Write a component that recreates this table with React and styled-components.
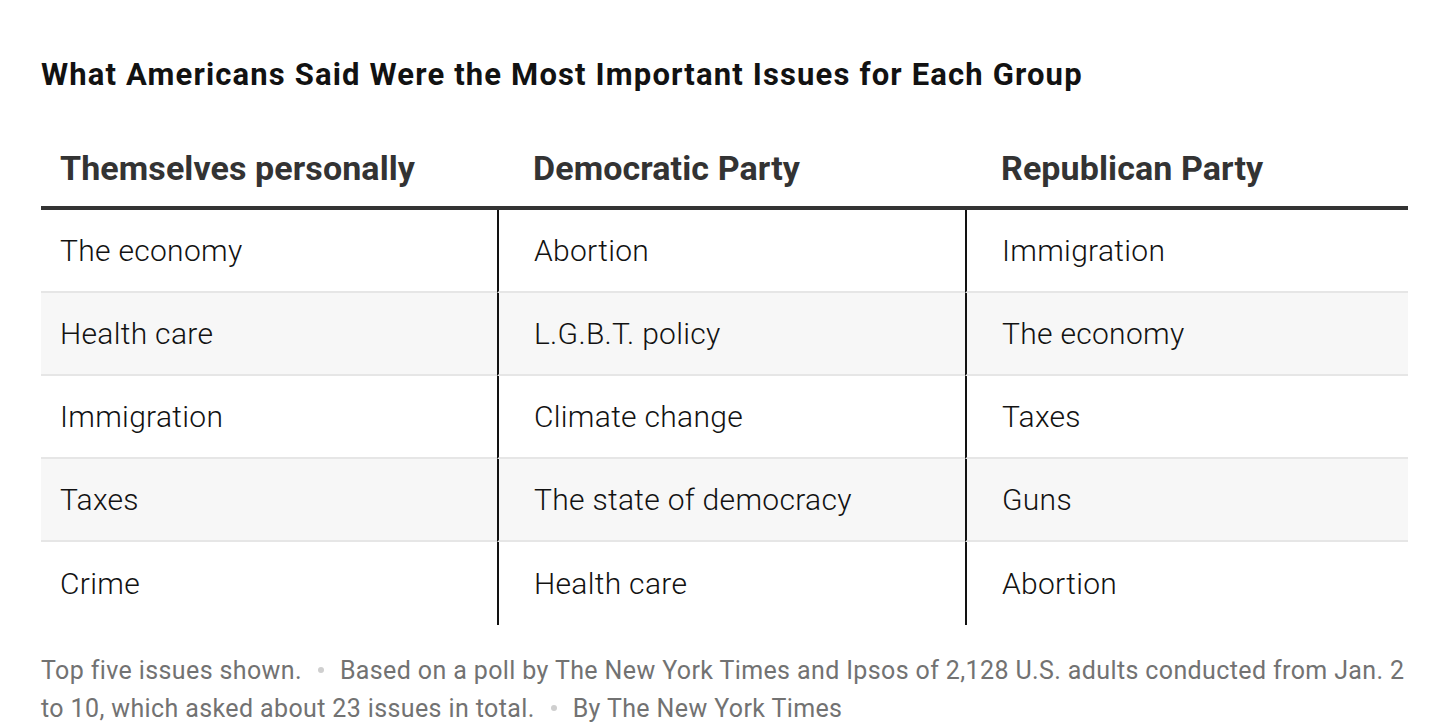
import React from 'react';
import styled, { createGlobalStyle } from 'styled-components';

const GlobalStyle = createGlobalStyle`
  html, body {
    margin: 0;
    padding: 0;
    background: #fff;
  }
  body {
    font-family: Roboto, "Liberation Sans", sans-serif;
    color: #121212;
  }
`;

const Page = styled.div`
  width: 1456px;
  padding: 57px 48px 0 41px;
  box-sizing: border-box;
`;

const Title = styled.h1`
  margin: 0;
  font-size: 31px;
  line-height: 36px;
  font-weight: 700;
  letter-spacing: 1.15px;
  color: #121212;
`;

const Table = styled.div`
  margin-top: 37px;
  display: grid;
  grid-template-columns: 456px 468px 443px;
`;

const HeadCell = styled.div`
  height: 76px;
  display: flex;
  align-items: center;
  padding-left: ${(p) => (p.$first ? '19px' : '36px')};
  font-size: 34px;
  font-weight: 700;
  letter-spacing: 0.1px;
  color: #333;
  border-bottom: 4px solid #333;
`;

const Cell = styled.div`
  height: ${(p) => (p.$last ? '83px' : '81px')};
  display: flex;
  align-items: center;
  padding-left: ${(p) => (p.$first ? '19px' : '35px')};
  font-size: 30px;
  font-weight: 300;
  letter-spacing: 0.3px;
  color: #121212;
  background: ${(p) => (p.$shaded ? '#f7f7f7' : '#fff')};
  border-bottom: ${(p) => (p.$last ? 'none' : '2px solid #e6e6e6')};
  border-left: ${(p) => (p.$first ? 'none' : '2px solid #121212')};
`;

const Notes = styled.p`
  margin: 27px 0 0;
  font-size: 25px;
  line-height: 38px;
  font-weight: 400;
  letter-spacing: 0.38px;
  white-space: nowrap;
  color: #727272;
`;

const Dot = styled.span`
  display: inline-block;
  width: 6px;
  height: 6px;
  margin: 0 16px 4px 16px;
  border-radius: 50%;
  background: #cfcfcf;
  vertical-align: middle;
`;

const headers = ['Themselves personally', 'Democratic Party', 'Republican Party'];

const rows = [
  ['The economy', 'Abortion', 'Immigration'],
  ['Health care', 'L.G.B.T. policy', 'The economy'],
  ['Immigration', 'Climate change', 'Taxes'],
  ['Taxes', 'The state of democracy', 'Guns'],
  ['Crime', 'Health care', 'Abortion'],
];

export default function App() {
  return (
    <>
      <GlobalStyle />
      <Page>
        <Title>What Americans Said Were the Most Important Issues for Each Group</Title>
        <Table>
          {headers.map((h, i) => (
            <HeadCell key={h} $first={i === 0}>
              {h}
            </HeadCell>
          ))}
          {rows.map((row, r) =>
            row.map((text, c) => (
              <Cell
                key={`${r}-${c}`}
                $first={c === 0}
                $shaded={r % 2 === 1}
                $last={r === rows.length - 1}
              >
                {text}
              </Cell>
            ))
          )}
        </Table>
        <Notes>
          Top five issues shown.
          <Dot />
          Based on a poll by The New York Times and Ipsos of 2,128 U.S. adults conducted from Jan. 2
          <br />
          to 10, which asked about 23 issues in total.
          <Dot />
          By The New York Times
        </Notes>
      </Page>
    </>
  );
}
